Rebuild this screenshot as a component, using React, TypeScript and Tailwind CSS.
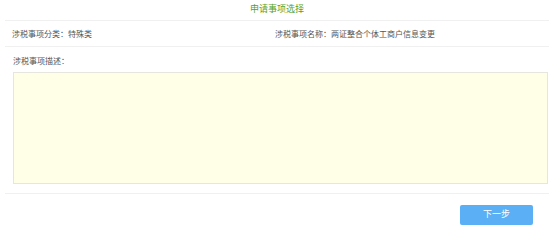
export default function App() {
  return (
    <div
      className="w-[554px] h-[229px] bg-white px-[5px] text-[#555]"
      style={{ fontFamily: '"Liberation Sans", "Noto Sans CJK SC", sans-serif' }}
    >
      {/* title */}
      <div className="h-[21px] flex items-center justify-center border-b border-[#f0f0f0] text-[9px] text-[#52a32a]">
        申请事项选择
      </div>

      {/* item info */}
      <div className="h-[26px] pt-[3px] flex items-center border-b border-[#f0f0f0] text-[8px] text-[#555]">
        <div className="w-[270px] pl-[7px]">涉税事项分类：特殊类</div>
        <div>涉税事项名称：两证整合个体工商户信息变更</div>
      </div>

      {/* description */}
      <div className="pl-[8px] pr-[1px] border-b border-[#f0f0f0] pb-[9px]">
        <div className="h-[25px] pt-[10px] text-[8px] leading-[10px]">涉税事项描述：</div>
        <div className="h-[112px] bg-[#fffee6] border border-[#e6e6df]" />
      </div>

      {/* footer */}
      <div className="flex justify-end pt-[11px] pr-[16px]">
        <button className="w-[73px] h-[20px] rounded-[2px] bg-[#5aaff5] text-white text-[9px]">
          下一步
        </button>
      </div>
    </div>
  );
}
